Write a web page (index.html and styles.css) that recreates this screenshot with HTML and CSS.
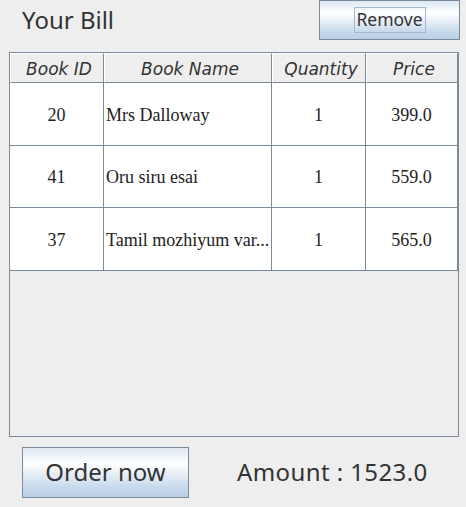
FILE: index.html
```html
<!DOCTYPE html>
<html>
<head>
<meta charset="utf-8">
<link rel="stylesheet" href="styles.css">
</head>
<body>
<div class="frame">
  <div class="topbar">
    <div class="title">Your Bill</div>
    <button class="btn remove"><span class="focus">Remove</span></button>
  </div>
  <div class="scrollpane">
    <div class="grid header">
      <div class="hcell">Book ID</div>
      <div class="hcell">Book Name</div>
      <div class="hcell">Quantity</div>
      <div class="hcell">Price</div>
    </div>
    <div class="grid row">
      <div class="cell c">20</div>
      <div class="cell l">Mrs Dalloway</div>
      <div class="cell c">1</div>
      <div class="cell c">399.0</div>
    </div>
    <div class="grid row short">
      <div class="cell c">41</div>
      <div class="cell l">Oru siru esai</div>
      <div class="cell c">1</div>
      <div class="cell c">559.0</div>
    </div>
    <div class="grid row">
      <div class="cell c">37</div>
      <div class="cell l">Tamil mozhiyum var...</div>
      <div class="cell c">1</div>
      <div class="cell c">565.0</div>
    </div>
  </div>
  <div class="bottombar">
    <button class="btn order">Order now</button>
    <div class="amount">Amount : 1523.0</div>
  </div>
</div>
</body>
</html>
```
FILE: styles.css
```css
html, body {
  margin: 0;
  padding: 0;
  background: #eeeeee;
}
.frame {
  width: 466px;
  height: 507px;
  display: flex;
  flex-direction: column;
  font-family: "Noto Sans", "DejaVu Sans", sans-serif;
  color: #333333;
}
.topbar {
  height: 52px;
  display: flex;
  align-items: flex-start;
}
.title {
  font-size: 24px;
  margin-left: 22px;
  margin-top: 3px;
  line-height: 34px;
}
.btn {
  box-sizing: border-box;
  border: 1px solid #7a8a99;
  background: linear-gradient(to bottom, #dde8f3 0%, #ffffff 32%, #c8d9ec 80%, #b8cfe5 100%);
  font-family: "Noto Sans", "DejaVu Sans", sans-serif;
  color: #333333;
  padding: 0;
  margin: 0;
  display: flex;
  align-items: center;
  justify-content: center;
}
.remove {
  width: 141px;
  height: 40px;
  margin-left: auto;
  margin-right: 6px;
  font-size: 17.5px;
}
.focus {
  border: 1px solid #a3b8cc;
  padding: 0 1px;
  height: 24px;
  width: 68px;
  line-height: 23px;
  box-sizing: content-box;
  display: block;
}
.scrollpane {
  margin-left: 9px;
  width: 448px;
  height: 383px;
  border: 1px solid #7a8a99;
  background: #eeeeee;
}
.grid {
  display: grid;
  grid-template-columns: 94px 168px 94px 92px;
}
.hcell {
  box-sizing: border-box;
  height: 30px;
  border-top: 1px solid #ffffff;
  border-left: 1px solid #ffffff;
  border-right: 1px solid #7a8a99;
  border-bottom: 1px solid #7a8a99;
  font-family: "DejaVu Sans", sans-serif;
  font-style: italic;
  font-size: 17px;
  display: flex;
  align-items: center;
  justify-content: center;
  padding-top: 2px;
  padding-left: 4px;
}
.row {
  background: #ffffff;
}
.cell {
  box-sizing: border-box;
  height: 63px;
  border-right: 1px solid #7a8a99;
  border-bottom: 1px solid #7a8a99;
  font-family: "Liberation Serif", serif;
  font-size: 18px;
  color: #222222;
  display: flex;
  align-items: center;
  white-space: nowrap;
  overflow: hidden;
  padding-top: 2px;
}
.row.short .cell {
  height: 62px;
}
.cell.c {
  justify-content: center;
}
.cell.l {
  padding-left: 2px;
}
.bottombar {
  display: flex;
  align-items: center;
  margin-top: 10px;
}
.order {
  width: 167px;
  height: 51px;
  margin-left: 22px;
  font-size: 24px;
  padding-bottom: 2px;
}
.amount {
  font-size: 24px;
  margin-left: 48px;
  margin-top: -2px;
  letter-spacing: 0.4px;
}
```
